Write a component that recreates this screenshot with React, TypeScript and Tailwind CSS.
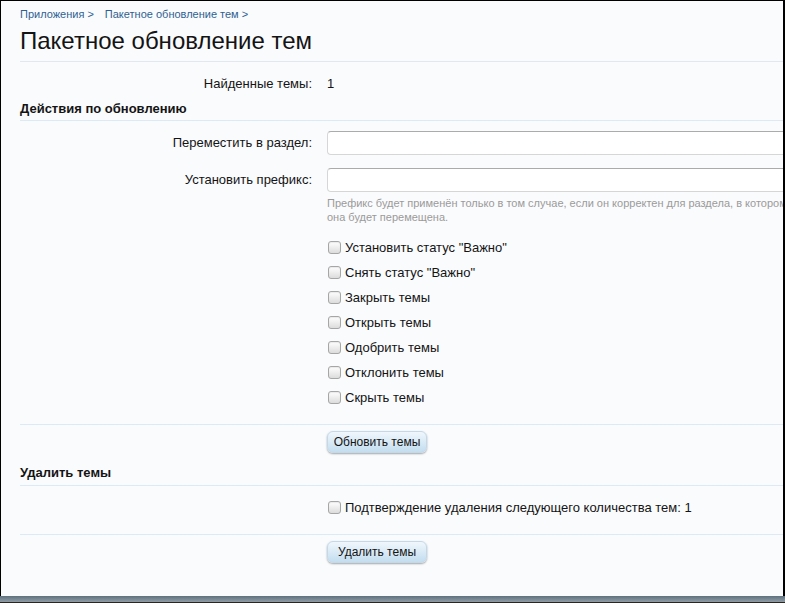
import React from "react";

const checks = [
  'Установить статус "Важно"',
  'Снять статус "Важно"',
  "Закрыть темы",
  "Открыть темы",
  "Одобрить темы",
  "Отклонить темы",
  "Скрыть темы",
];

function Box() {
  return (
    <span className="inline-block w-[13px] h-[13px] rounded-[3px] border border-[#a6a6a6] bg-gradient-to-b from-[#ffffff] to-[#dcdcdc] shadow-[inset_0_1px_1px_rgba(0,0,0,0.08)]" />
  );
}

function CheckRow({ label }: { label: string }) {
  return (
    <div className="flex items-center h-[25px]">
      <div className="w-[292px] shrink-0" />
      <div className="ml-[16px] flex items-center">
        <Box />
        <span className="ml-[4px] text-[13px] text-[#141414]">{label}</span>
      </div>
    </div>
  );
}

function Btn({ label }: { label: string }) {
  return (
    <div className="flex">
      <div className="w-[292px] shrink-0" />
      <button className="ml-[15px] w-[100px] h-[22px] rounded-[6px] border border-[#c3d8e8] bg-gradient-to-b from-[#f0f7fc] to-[#c3ddf0] text-[12px] text-[#141414] shadow-[0_1px_2px_rgba(0,0,0,0.35)] leading-[20px]">
        {label}
      </button>
    </div>
  );
}

export default function App() {
  return (
    <div className="w-[785px] h-[603px] flex flex-col overflow-hidden bg-[#1a1a1a] font-['Liberation_Sans',Arial,sans-serif]">
      <div className="h-[596px] border-t border-l border-r-2 border-black bg-[#fafbfd] overflow-hidden shrink-0">
        <div className="w-[1000px] pl-[19px] pt-[5px]">
          <div className="h-[16px] leading-[16px] text-[11px] text-[#2f5f92]">
            <span>Приложения &gt;</span>
            <span className="ml-[11px]">Пакетное обновление тем &gt;</span>
          </div>
          <div className="mt-[4px] h-[30px] leading-[30px] text-[24px] text-[#141414]">
            Пакетное обновление тем
          </div>
          <div className="mt-[5px] h-px bg-[#e1e8ef]" />

          <div className="mt-[12px] h-[20px] flex items-center text-[13px] text-[#141414]">
            <div className="w-[292px] shrink-0 text-right">Найденные темы:</div>
            <div className="ml-[15px]">1</div>
          </div>

          <div className="mt-[6px] h-[18px] leading-[18px] text-[13px] font-bold text-[#141414]">
            Действия по обновлению
          </div>
          <div className="mt-[2px] h-px bg-[#dbeaf6]" />

          <div className="mt-[10px] h-[24px] flex items-center text-[13px] text-[#141414]">
            <div className="w-[292px] shrink-0 text-right">Переместить в раздел:</div>
            <div className="ml-[15px] w-[600px] h-[24px] rounded-[4px] border border-[#d6d6d6] border-t-[#ababab] bg-white" />
          </div>
          <div className="mt-[13px] h-[24px] flex items-center text-[13px] text-[#141414]">
            <div className="w-[292px] shrink-0 text-right">Установить префикс:</div>
            <div className="ml-[15px] w-[600px] h-[24px] rounded-[4px] border border-[#d6d6d6] border-t-[#ababab] bg-white" />
          </div>
          <div className="mt-[4px] flex">
            <div className="w-[292px] shrink-0" />
            <div className="ml-[15px] text-[11px] leading-[14px] text-[#9a9a9a] whitespace-nowrap">
              <div>Префикс будет применён только в том случае, если он корректен для раздела, в котором</div>
              <div>она будет перемещена.</div>
            </div>
          </div>

          <div className="mt-[11px]">
            {checks.map((c) => (
              <CheckRow key={c} label={c} />
            ))}
          </div>
          <div className="mt-[14px] h-px bg-[#dbeaf6]" />
          <div className="mt-[6px]">
            <Btn label="Обновить темы" />
          </div>

          <div className="mt-[11px] h-[18px] leading-[18px] text-[13px] font-bold text-[#141414]">
            Удалить темы
          </div>
          <div className="mt-[3px] h-px bg-[#dbeaf6]" />
          <div className="mt-[9px]">
            <CheckRow label="Подтверждение удаления следующего количества тем: 1" />
          </div>
          <div className="mt-[14px] h-px bg-[#dbeaf6]" />
          <div className="mt-[6px]">
            <Btn label="Удалить темы" />
          </div>
        </div>
      </div>
      <div className="h-[6px] shrink-0 bg-gradient-to-b from-[#5f717e] to-[#8f9ca6]" />
      <div className="h-px shrink-0 bg-[#2a2620]" />
    </div>
  );
}
